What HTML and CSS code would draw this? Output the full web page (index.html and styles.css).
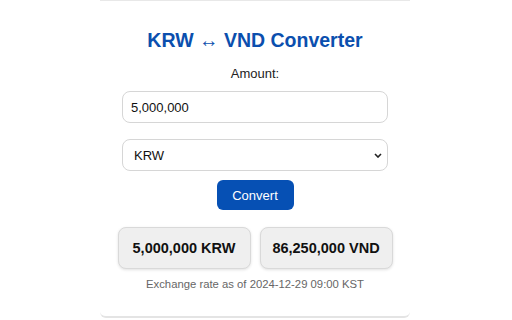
FILE: index.html
```html
<!DOCTYPE html>
<html>
<head>
<meta charset="utf-8">
<link rel="stylesheet" href="styles.css">
</head>
<body>
<div class="card">
  <h1 class="title">KRW ↔ VND Converter</h1>
  <label class="label" for="amount">Amount:</label>
  <input id="amount" class="field" type="text" value="5,000,000">
  <div class="select-wrap">
    <select class="field select">
      <option>KRW</option>
      <option>VND</option>
    </select>
    <svg class="chev" width="8" height="5" viewBox="0 0 8 5"><path d="M1 1 L4 4 L7 1" fill="none" stroke="#222" stroke-width="1.6"/></svg>
  </div>
  <button class="btn">Convert</button>
  <div class="results">
    <div class="result">5,000,000 KRW</div>
    <div class="result">86,250,000 VND</div>
  </div>
  <p class="rate">Exchange rate as of 2024-12-29 09:00 KST</p>
</div>
</body>
</html>
```
FILE: styles.css
```css
html, body {
  margin: 0;
  padding: 0;
  background: #fff;
  font-family: "Liberation Sans", Arial, sans-serif;
}
.card {
  box-sizing: border-box;
  width: 310px;
  height: 318px;
  margin: 0 auto;
  position: relative;
  left: -1px;
  border-top: 1px solid #e8e8e8;
  border-bottom: 2px solid #e4e4e4;
  border-radius: 0 0 6px 6px;
  background: #fff;
  display: flex;
  flex-direction: column;
  align-items: center;
  padding-top: 27px;
}
.title {
  margin: 0;
  font-size: 19.5px;
  font-weight: bold;
  color: #0b4fae;
  line-height: 24px;
}
.label {
  margin-top: 14px;
  font-size: 13px;
  color: #222;
  line-height: 16px;
}
.field {
  box-sizing: border-box;
  width: 266px;
  height: 32px;
  margin-top: 9px;
  border: 1px solid #d6d6d6;
  border-radius: 8px;
  padding: 0 8px;
  font-family: "Liberation Sans", Arial, sans-serif;
  font-size: 13px;
  color: #111;
  background: #fff;
  outline: none;
}
.select-wrap {
  position: relative;
  margin-top: 16px;
}
.select-wrap .select {
  margin-top: 0;
  appearance: none;
  -webkit-appearance: none;
  padding-left: 11px;
}
.chev {
  position: absolute;
  right: 6px;
  top: 14px;
  pointer-events: none;
}
.btn {
  margin-top: 9px;
  width: 77px;
  height: 30px;
  border: none;
  border-radius: 6px;
  background: #0650b4;
  color: #fff;
  font-family: "Liberation Sans", Arial, sans-serif;
  font-size: 13px;
  padding: 0;
}
.results {
  display: flex;
  gap: 9px;
  margin-top: 17px;
}
.result {
  box-sizing: border-box;
  width: 133px;
  height: 42px;
  display: flex;
  align-items: center;
  justify-content: center;
  background: #efefef;
  border: 1px solid #d9d9d9;
  border-radius: 8px;
  box-shadow: 0 1px 3px rgba(0,0,0,0.12);
  font-size: 14.5px;
  font-weight: bold;
  color: #111;
}
.rate {
  margin: 8px 0 0 0;
  font-size: 11.3px;
  color: #666;
  line-height: 14px;
}
```
